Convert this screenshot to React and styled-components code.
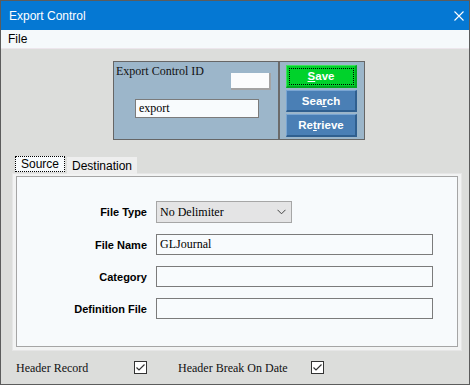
import React from "react";
import styled, { createGlobalStyle } from "styled-components";

const Global = createGlobalStyle`
  html, body { margin: 0; padding: 0; background: #dcdddb; }
  * { box-sizing: border-box; }
`;

const Window = styled.div`
  width: 470px;
  height: 385px;
  border: 1px solid #5c5c5c;
  display: flex;
  flex-direction: column;
  font-family: "Liberation Sans", Arial, sans-serif;
  background: #dcdddb;
  overflow: hidden;
`;

const TitleBar = styled.div`
  height: 29px;
  flex: none;
  background: #0578d3;
  color: #fff;
  display: flex;
  align-items: center;
  justify-content: space-between;
  padding: 0 5px 0 8px;
  font-size: 12px;
`;

const CloseIcon = styled.svg`
  width: 10px;
  height: 10px;
`;

const MenuBar = styled.div`
  height: 19px;
  flex: none;
  background: #f5f9fb;
  border-bottom: 1px solid #ece6ec;
  display: flex;
  align-items: center;
  padding-left: 7px;
  font-size: 12px;
  color: #000;
`;

const Body = styled.div`
  flex: 1;
  display: flex;
  flex-direction: column;
  padding-top: 12px;
`;

const TopPanel = styled.div`
  margin-left: 112px;
  width: 252px;
  height: 79px;
  border: 1px solid #666;
  background: #9cb6ca;
  display: flex;
`;

const IdSection = styled.div`
  width: 164px;
  padding: 2px 7px 0 2px;
  display: flex;
  flex-direction: column;
`;

const IdTop = styled.div`
  display: flex;
  justify-content: space-between;
  align-items: flex-start;
`;

const SerifLabel = styled.span`
  font-family: "Liberation Serif", "Times New Roman", serif;
  font-size: 12px;
  line-height: 14px;
  color: #111;
`;

const SmallBox = styled.div`
  width: 40px;
  height: 17px;
  margin-top: 9px;
  background: #fbfcfd;
  border-right: 2px solid #a3a3a3;
  border-bottom: 2px solid #a3a3a3;
`;

const TextInput = styled.div`
  height: ${(p) => p.$h || 20}px;
  width: ${(p) => (p.$w ? p.$w + "px" : "auto")};
  margin: ${(p) => p.$m || "0"};
  border: 1px solid #7b7b7b;
  background: ${(p) => p.$bg || "#f8fbfd"};
  font-family: "Liberation Serif", "Times New Roman", serif;
  font-size: 12px;
  color: #000;
  display: flex;
  align-items: center;
  padding-left: 3px;
`;

const ButtonSection = styled.div`
  flex: 1;
  border-left: 2px solid #6b6b6b;
  padding: 3px 6px 0 6px;
  display: flex;
  flex-direction: column;
  gap: 2px;
`;

const ActionButton = styled.div`
  height: ${(p) => p.$h || 22}px;
  width: 71px;
  display: flex;
  align-items: center;
  justify-content: center;
  color: #fff;
  font-weight: bold;
  font-size: 11.5px;
  background: ${(p) => (p.$primary ? "#00d22b" : "#4a7fb5")};
  border-top: 1px solid ${(p) => (p.$primary ? "#3be25a" : "#79a5d2")};
  border-left: 1px solid ${(p) => (p.$primary ? "#3be25a" : "#79a5d2")};
  border-right: 2px solid ${(p) => (p.$primary ? "#00a820" : "#2f5f8f")};
  border-bottom: 2px solid ${(p) => (p.$primary ? "#00a820" : "#2f5f8f")};
  outline: ${(p) => (p.$primary ? "1px dotted #000" : "none")};
  outline-offset: -4px;
  u { text-decoration: underline; text-underline-offset: 1px; }
`;

const TabArea = styled.div`
  margin: 16px 0 0 11px;
  width: 450px;
  display: flex;
  flex-direction: column;
`;

const TabStrip = styled.div`
  display: flex;
  align-items: flex-start;
  padding-left: 3px;
  height: 17px;
`;

const Tab = styled.div`
  height: ${(p) => (p.$active ? 16 : 17)}px;
  margin-top: ${(p) => (p.$active ? 0 : 1)}px;
  width: ${(p) => p.$w}px;
  margin-right: 2px;
  font-size: 12px;
  color: #000;
  display: flex;
  align-items: center;
  justify-content: center;
  background: ${(p) => (p.$active ? "#f7fafc" : "#eeeeee")};
  border: ${(p) => (p.$active ? "1px dotted #000" : "none")};
  position: relative;
  z-index: 1;
`;

const Frame = styled.div`
  height: 178px;
  background: #f2f3f3;
  border: 1px solid #e6e6e6;
  padding: 2px 3px 3px 3px;
  display: flex;
`;

const Panel = styled.div`
  flex: 1;
  border: 1px solid #a5a5a5;
  background: #f7fafc;
  padding-top: 24px;
`;

const FormGrid = styled.div`
  display: grid;
  grid-template-columns: 130px 277px;
  column-gap: 9px;
  row-gap: 11px;
`;

const FieldLabel = styled.div`
  font-weight: bold;
  font-size: 11px;
  color: #000;
  text-align: right;
  align-self: center;
`;

const Select = styled.div`
  width: 136px;
  height: 22px;
  border: 1px solid #a6a6a6;
  background: #e4e4e5;
  display: flex;
  align-items: center;
  justify-content: space-between;
  padding: 0 5px 0 3px;
  font-family: "Liberation Serif", "Times New Roman", serif;
  font-size: 12px;
  color: #000;
`;

const BottomRow = styled.div`
  margin-top: 10px;
  padding-left: 15px;
  display: flex;
  align-items: center;
  height: 13px;
`;

const CheckLabel = styled(SerifLabel)`
  width: ${(p) => p.$w}px;
`;

const CheckBox = styled.div`
  width: 13px;
  height: 13px;
  border: 1px solid #333;
  background: #fff;
  margin-right: ${(p) => p.$mr || 0}px;
  display: flex;
  align-items: center;
  justify-content: center;
`;

const Check = () => (
  <svg width="11" height="11" viewBox="0 0 11 11">
    <polyline points="1.5,5.5 4,8 9.5,2.5" fill="none" stroke="#333" strokeWidth="1.2" />
  </svg>
);

export default function App() {
  return (
    <>
      <Global />
      <Window>
        <TitleBar>
          <span>Export Control</span>
          <CloseIcon viewBox="0 0 10 10">
            <path d="M0.5 0.5 L9.5 9.5 M9.5 0.5 L0.5 9.5" stroke="#fff" strokeWidth="1.1" />
          </CloseIcon>
        </TitleBar>
        <MenuBar>File</MenuBar>
        <Body>
          <TopPanel>
            <IdSection>
              <IdTop>
                <SerifLabel>Export Control ID</SerifLabel>
                <SmallBox />
              </IdTop>
              <TextInput $w={124} $h={19} $m="9px 0 0 19px" $bg="#f8fbfd">
                export
              </TextInput>
            </IdSection>
            <ButtonSection>
              <ActionButton $primary $h={23}>
                <span>
                  <u>S</u>ave
                </span>
              </ActionButton>
              <ActionButton $h={22}>
                <span>
                  Sea<u>r</u>ch
                </span>
              </ActionButton>
              <ActionButton $h={23}>
                <span>
                  Re<u>t</u>rieve
                </span>
              </ActionButton>
            </ButtonSection>
          </TopPanel>

          <TabArea>
            <TabStrip>
              <Tab $active $w={50}>Source</Tab>
              <Tab $w={70}>Destination</Tab>
            </TabStrip>
            <Frame>
              <Panel>
                <FormGrid>
                  <FieldLabel>File Type</FieldLabel>
                  <Select>
                    <span>No Delimiter</span>
                    <svg width="9" height="6" viewBox="0 0 9 6">
                      <polyline points="0.5,0.8 4.5,4.8 8.5,0.8" fill="none" stroke="#444" strokeWidth="1" />
                    </svg>
                  </Select>
                  <FieldLabel>File Name</FieldLabel>
                  <TextInput $h={21}>GLJournal</TextInput>
                  <FieldLabel>Category</FieldLabel>
                  <TextInput $h={21} />
                  <FieldLabel>Definition File</FieldLabel>
                  <TextInput $h={21} />
                </FormGrid>
              </Panel>
            </Frame>
          </TabArea>

          <BottomRow>
            <CheckLabel $w={118}>Header Record</CheckLabel>
            <CheckBox $mr={31}>
              <Check />
            </CheckBox>
            <CheckLabel $w={133}>Header Break On Date</CheckLabel>
            <CheckBox>
              <Check />
            </CheckBox>
          </BottomRow>
        </Body>
      </Window>
    </>
  );
}
